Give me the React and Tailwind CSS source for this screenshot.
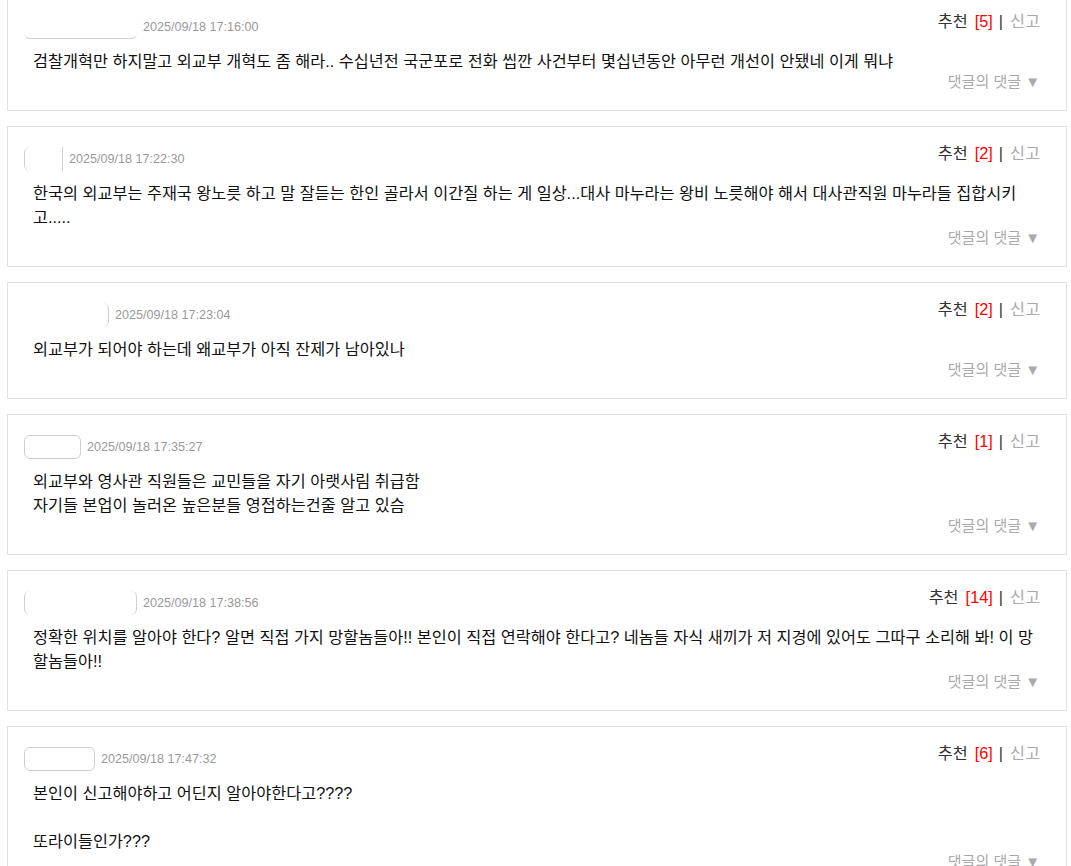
import React from "react";

const comments = [
  {
    date: "2025/09/18 17:16:00",
    votes: 5,
    badge: "w-[113px] border-b rounded-md",
    lines: ["검찰개혁만 하지말고 외교부 개혁도 좀 해라.. 수십년전 국군포로 전화 씹깐 사건부터 몇십년동안 아무런 개선이 안됐네 이게 뭐냐"],
  },
  {
    date: "2025/09/18 17:22:30",
    votes: 2,
    badge: "w-[39px] border-l border-r rounded-l-md",
    lines: ["한국의 외교부는 주재국 왕노릇 하고 말 잘듣는 한인 골라서 이간질 하는 게 일상...대사 마누라는 왕비 노릇해야 해서 대사관직원 마누라들 집합시키고....."],
  },
  {
    date: "2025/09/18 17:23:04",
    votes: 2,
    badge: "w-[85px] border-r rounded-md",
    lines: ["외교부가 되어야 하는데 왜교부가 아직 잔제가 남아있나"],
  },
  {
    date: "2025/09/18 17:35:27",
    votes: 1,
    badge: "w-[57px] border rounded-md",
    lines: ["외교부와 영사관 직원들은 교민들을 자기 아랫사림 취급함", "자기들 본업이 놀러온 높은분들 영접하는건줄 알고 있슴"],
  },
  {
    date: "2025/09/18 17:38:56",
    votes: 14,
    badge: "w-[113px] border-l border-r rounded-md",
    lines: ["정확한 위치를 알아야 한다? 알면 직접 가지 망할놈들아!! 본인이 직접 연락해야 한다고? 네놈들 자식 새끼가 저 지경에 있어도 그따구 소리해 봐! 이 망할놈들아!!"],
  },
  {
    date: "2025/09/18 17:47:32",
    votes: 6,
    badge: "w-[71px] border rounded-md",
    lines: ["본인이 신고해야하고 어딘지 알아야한다고????", "", "또라이들인가???"],
  },
];

function Comment({ c }) {
  return (
    <div className="w-[1060px] ml-[7px] mb-[15px] border border-[#e2e2e2] bg-white pt-[16px] pb-[20px] pl-[16px] pr-[26px]">
      <div className="flex justify-between items-start">
        <div className="mt-[4px] flex items-center">
          <span className={`h-[24px] border-[#cfcfcf] bg-white ${c.badge}`}></span>
          <span className="ml-[6px] text-[12.6px] text-[#999] pt-[1px]">{c.date}</span>
        </div>
        <div className="text-[16.3px] leading-[20px] flex items-center">
          <span className="text-[#333]">추천</span>
          <span className="ml-[7px] text-[#f00]">[{c.votes}]</span>
          <span className="ml-[6px] text-[#333]">|</span>
          <span className="ml-[7px] text-[#aaa]">신고</span>
        </div>
      </div>
      <div className="mt-[10px] pl-[9px] text-[16.3px] leading-[24px] text-[#111]">
        {c.lines.map((l, i) => (
          <p key={i} className="min-h-[24px]">{l}</p>
        ))}
      </div>
      <div className="mt-[1px] flex justify-end text-[15px] leading-[16px] text-[#aaa]">
        <span>댓글의 댓글 ▼</span>
      </div>
    </div>
  );
}

export default function App() {
  return (
    <div
      className="bg-white min-h-screen -mt-[6px] h-[872px] overflow-hidden"
      style={{ fontFamily: '"Liberation Sans", "Noto Sans CJK KR", sans-serif' }}
    >
      {comments.map((c, i) => (
        <Comment key={i} c={c} />
      ))}
    </div>
  );
}
